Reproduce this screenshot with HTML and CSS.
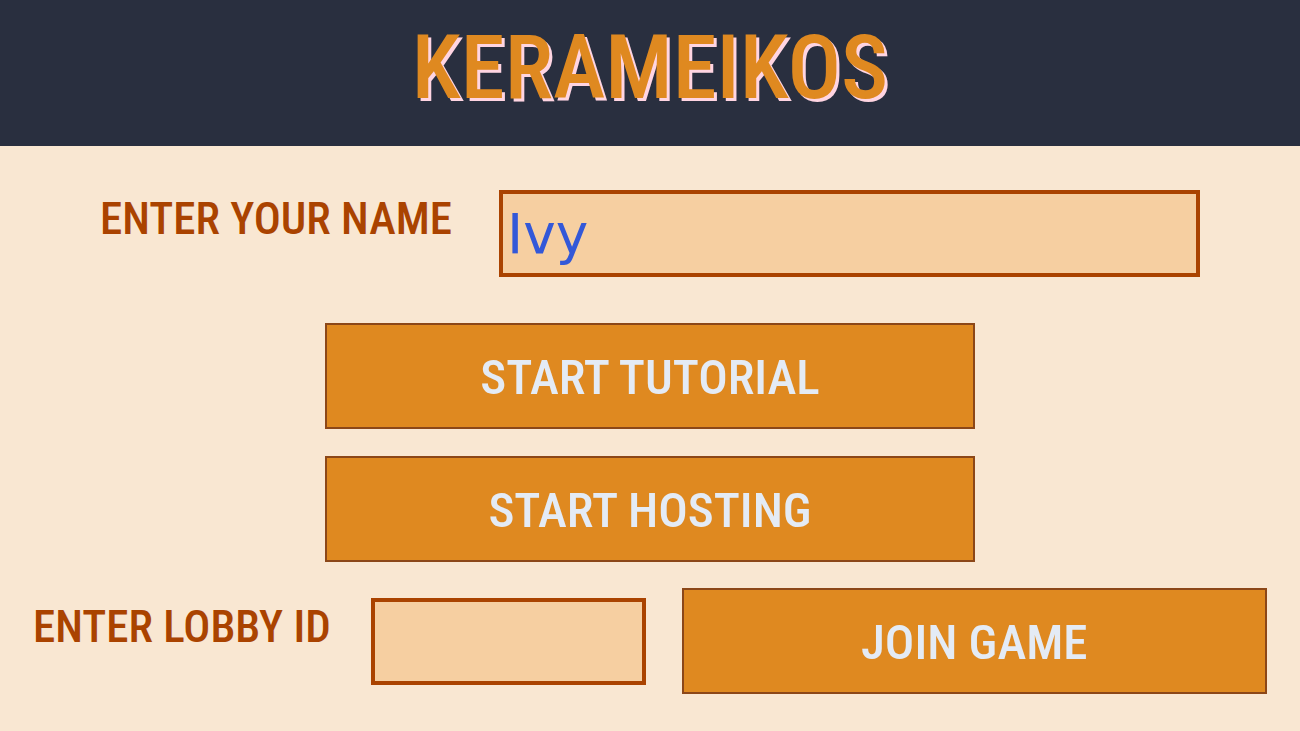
FILE: index.html
```html
<!DOCTYPE html>
<html lang="en">
<head>
<meta charset="utf-8">
<meta name="viewport" content="width=device-width, initial-scale=1">
<title>Kerameikos</title>
<link rel="stylesheet" href="styles.css">
</head>
<body>
<header class="banner">
  <h1 class="title">KERAMEIKOS</h1>
</header>
<main class="menu">
  <div class="name-row">
    <label class="label" for="player-name">ENTER YOUR NAME</label>
    <input class="field" id="player-name" type="text" value="Ivy">
  </div>
  <div class="actions">
    <button class="button" type="button">START TUTORIAL</button>
    <button class="button" type="button">START HOSTING</button>
  </div>
  <form class="join-row">
    <label class="label" for="lobby-id">ENTER LOBBY ID</label>
    <input class="field" id="lobby-id" type="text">
    <button class="button join" type="button">JOIN GAME</button>
  </form>
</main>
</body>
</html>
```

FILE: styles.css
```css
* {
  box-sizing: border-box;
}

body {
  margin: 0;
  min-height: 100vh;
  background: #f9e7d2;
  font-family: "Roboto Condensed", "Liberation Sans Narrow", "DejaVu Sans Condensed", sans-serif;
}

.banner {
  padding: 18px 0 28px;
  background: #292f3f;
  text-align: center;
}

.title {
  margin: 0;
  color: #df8920;
  font-size: 89px;
  line-height: 100px;
  font-weight: 500;
  text-shadow: 3px 3px 0 #ffd5e2;
}

.name-row {
  display: grid;
  grid-template-columns: 399fr 701fr;
  padding: 44px 100px 46px;
}

.label {
  padding-top: 2px;
  color: #aa4300;
  font-size: 45px;
  line-height: 54px;
  font-weight: 500;
  white-space: nowrap;
}

.field {
  width: 100%;
  min-width: 0;
  height: 87px;
  padding: 0 4px;
  border: 4px solid #aa4300;
  border-radius: 0;
  background: #f6cfa1;
  color: #3358d8;
  font-family: "DejaVu Sans", sans-serif;
  font-size: 55px;
}

.actions {
  display: grid;
  gap: 27px;
  width: 50%;
  margin: 0 auto;
}

.button {
  height: 106px;
  padding: 2px 16px 0;
  border: 2px solid #8c4718;
  border-radius: 0;
  background: #df8920;
  color: #e4ebf5;
  font-family: inherit;
  font-size: 49px;
  font-weight: 500;
}

.join-row {
  display: grid;
  grid-template-columns: 302fr 275fr 586fr;
  column-gap: 36px;
  align-items: center;
  padding: 26px 33px 36px;
}

.join-row .label {
  align-self: start;
  padding-top: 12px;
}
```
